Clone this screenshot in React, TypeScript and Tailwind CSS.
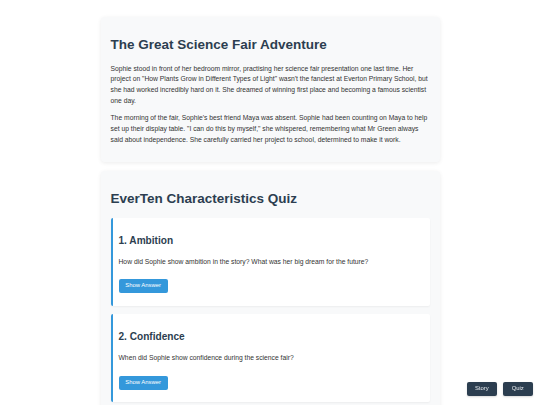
import { useState } from "react";

const story = [
  'Sophie stood in front of her bedroom mirror, practising her science fair presentation one last time. Her project on "How Plants Grow in Different Types of Light" wasn\'t the fanciest at Everton Primary School, but she had worked incredibly hard on it. She dreamed of winning first place and becoming a famous scientist one day.',
  'The morning of the fair, Sophie\'s best friend Maya was absent. Sophie had been counting on Maya to help set up their display table. "I can do this by myself," she whispered, remembering what Mr Green always said about independence. She carefully carried her project to school, determined to make it work.',
];

const questions = [
  {
    title: "1. Ambition",
    text: "How did Sophie show ambition in the story? What was her big dream for the future?",
    answer: "Sophie dreamed of winning first place and becoming a famous scientist one day.",
  },
  {
    title: "2. Confidence",
    text: "When did Sophie show confidence during the science fair?",
    answer: "She set up the display table on her own and presented her project.",
  },
];

function QuestionCard({ q }: { q: (typeof questions)[number] }) {
  const [open, setOpen] = useState(false);

  return (
    <div className="bg-white border-l-[2px] border-[#3498db] rounded-[2px] pl-[6px] pr-[7px] pt-[16.75px] pb-[11.5px] shadow-[0_1px_2px_rgba(0,0,0,0.05)]">
      <h3 className="text-[10.1px] leading-[11.6px] font-bold text-[#2c3e50]">{q.title}</h3>
      <p className="mt-[10.75px] text-[6.75px] leading-[10.8px] text-[#333]">{q.text}</p>
      <button
        onClick={() => setOpen(!open)}
        className="mt-[11.6px] h-[14px] px-[6.75px] rounded-[2px] bg-[#3498db] text-white text-[5.9px] leading-none"
      >
        {open ? "Hide Answer" : "Show Answer"}
      </button>
      {open && <p className="mt-[6px] text-[6.75px] leading-[10.8px] text-[#555]">{q.answer}</p>}
    </div>
  );
}

export default function App() {
  return (
    <div className="min-h-screen bg-white font-['Liberation_Sans',Arial,sans-serif] pt-[16.5px] pb-[20px]">
      <div className="w-[339px] mx-auto flex flex-col gap-[8.5px]">
        {/* Story */}
        <section className="bg-[#f8f9fa] rounded-[4px] shadow-[0_1px_4px_rgba(0,0,0,0.08)] px-[10px] pt-[20.5px] pb-[16.5px]">
          <h1 className="text-[13.5px] leading-[15.5px] font-bold text-[#2c3e50]">
            The Great Science Fair Adventure
          </h1>
          <div className="mt-[11px] flex flex-col gap-[6.75px]">
            {story.map((p, i) => (
              <p key={i} className="text-[6.75px] leading-[10.8px] text-[#333]">
                {p}
              </p>
            ))}
          </div>
        </section>

        {/* Quiz */}
        <section className="bg-[#f8f9fa] rounded-[4px] shadow-[0_1px_4px_rgba(0,0,0,0.08)] px-[10px] pt-[20px] pb-[12px]">
          <h2 className="text-[13.5px] leading-[15.5px] font-bold text-[#2c3e50]">
            EverTen Characteristics Quiz
          </h2>
          <div className="mt-[11.5px] flex flex-col gap-[8.5px]">
            {questions.map((q) => (
              <QuestionCard key={q.title} q={q} />
            ))}
          </div>
        </section>
      </div>

      {/* Nav */}
      <div className="fixed right-[7.5px] bottom-[9px] flex gap-[6.5px]">
        <button className="w-[29.5px] h-[14px] rounded-[2px] bg-[#2c3e50] text-[#e8ecef] text-[5.9px] leading-none shadow-[0_1px_2px_rgba(0,0,0,0.15)]">
          Story
        </button>
        <button className="w-[29.5px] h-[14px] rounded-[2px] bg-[#2c3e50] text-[#e8ecef] text-[5.9px] leading-none shadow-[0_1px_2px_rgba(0,0,0,0.15)]">
          Quiz
        </button>
      </div>
    </div>
  );
}
